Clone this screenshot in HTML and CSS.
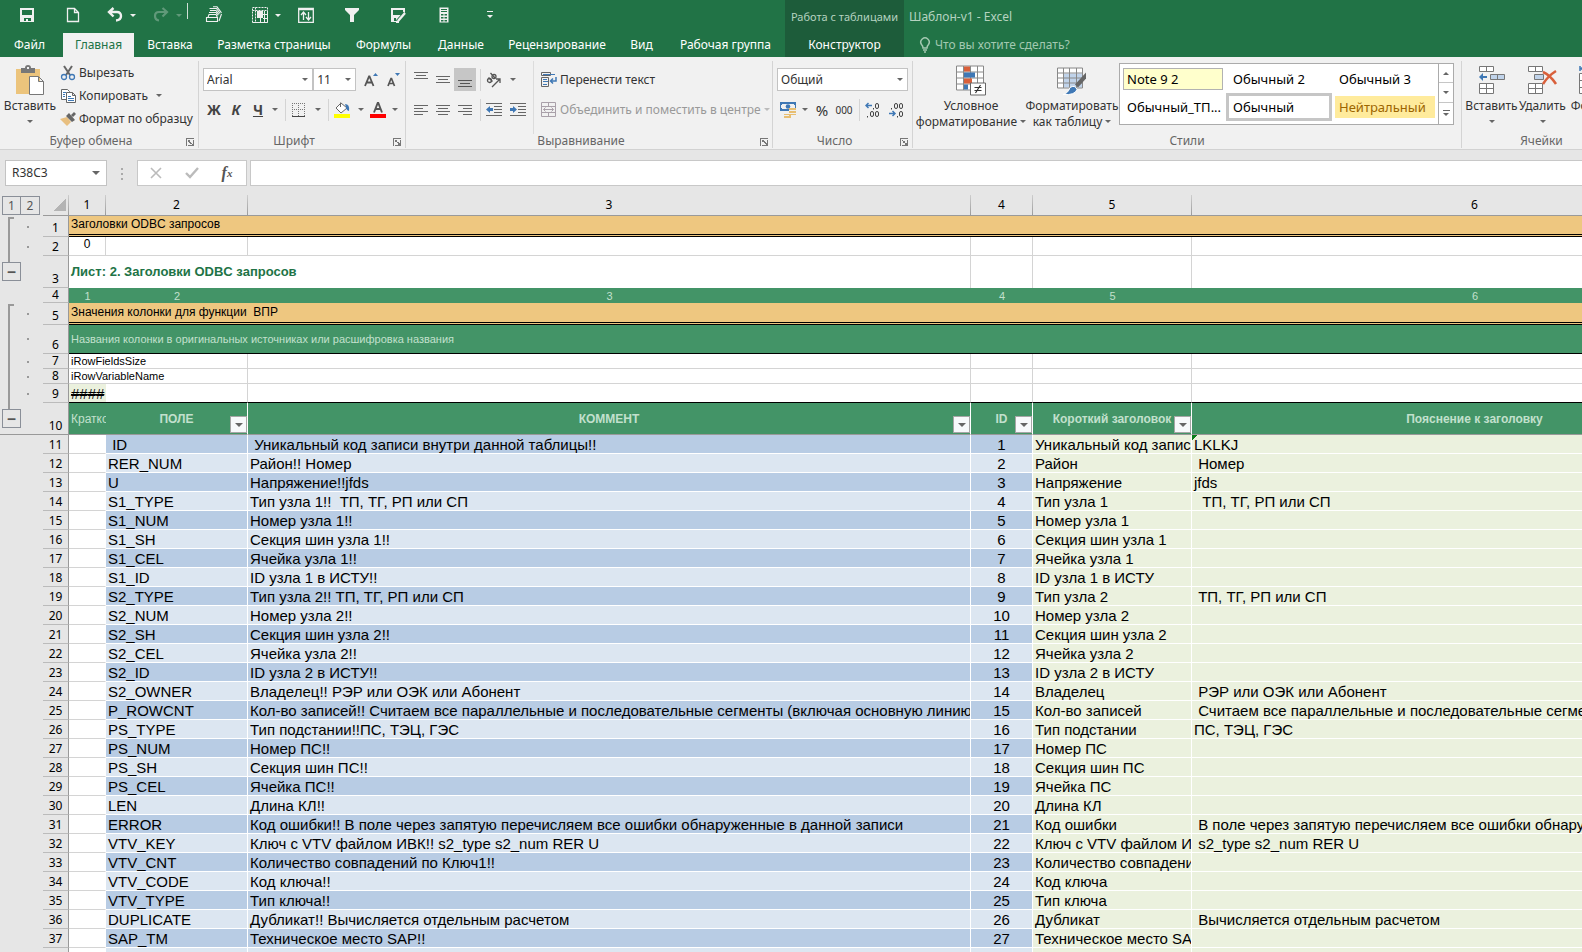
FILE: index.html
```html
<!DOCTYPE html>
<html lang="ru">
<head>
<meta charset="utf-8">
<title>Шаблон-v1 - Excel</title>
<link rel="stylesheet" href="styles.css">
</head>
<body>
<div class="app">
<header class="top">
  <div class="titlebar">
    <div class="qat">
      <button class="q" aria-label="Сохранить"><svg width="16" height="16" viewBox="0 0 16 16"><path fill="#f0f0f0" fill-rule="evenodd" d="M1 1h14v14H1zM3 3v5h10V3zM5 11v3h2v-2h2v2h3v-3z"/></svg></button>
      <button class="q" aria-label="Создать"><svg width="16" height="16" viewBox="0 0 16 16"><path fill="none" stroke="#f0f0f0" stroke-width="1.3" d="M2.5 1.5h7l4 4v9h-11zM9.500 1.500v4h4"/></svg></button>
      <span class="split shift"><button class="q" aria-label="Отменить"><svg width="16" height="16" viewBox="0 0 16 16"><path fill="none" stroke="#f0f0f0" stroke-width="2.400" d="M2 5h8q4 0 4 4t-5 4.500M6.500 1L2 5l4.500 4.500"/></svg></button><button class="qa" aria-label="Список отмены"><i class="dd"></i></button></span>
      <span class="split dim"><button class="q" aria-label="Повторить"><svg width="16" height="16" viewBox="0 0 16 16"><path fill="none" stroke="#f0f0f0" stroke-width="2.200" d="M14 5H6Q2 5 2 9t4 4.500M9.500 1L14 5l-4.500 4.500"/></svg></button><button class="qa" aria-label="Список повтора"><i class="dd"></i></button></span>
      <span class="qsep"></span>
      <button class="q" aria-label="Печать"><svg width="18" height="18" viewBox="0 0 18 18"><g fill="none" stroke="#f0f0f0" stroke-width="1.100"><path d="M1.500 11.500h11v4h-11zM3 11.500l1-3h7l1.500 3"/><path d="M4 6.500h7l2 3M5 4.500h6l3 4M4.500 2.500h7l3.500 5M8 .8h4l4.500 6M14 15l2.500-7"/></g></svg></button>
      <span class="split"><button class="q" aria-label="Таблица"><svg width="16" height="16" viewBox="0 0 16 16"><g fill="none" stroke="#f0f0f0"><path stroke-dasharray="2 1" d="M.5.5h15v15H.5zM.5 3.500h15M3.500.5v15"/><path d="M11 7.500h4.500M11 11.500h4.500M.5 15.500h15v-12M12.500 4v11M8.500 11v4"/></g><path fill="#f0f0f0" d="M5 4h6v7H5z"/></svg></button><button class="qa" aria-label="Варианты таблицы"><i class="dd"></i></button></span>
      <button class="q" aria-label="Сортировка"><svg width="16" height="16" viewBox="0 0 16 16"><path fill="none" stroke="#f0f0f0" stroke-width="1.300" d="M.7 1.500h14.600v13.800H.7zM.7 2.500h14.600M5.500 13V5.500M3 8l2.500-3L8 8M10.500 5v7.500M8 10l2.500 3L13 10"/></svg></button>
      <button class="q" aria-label="Фильтр"><svg width="16" height="16" viewBox="0 0 16 16"><path fill="#f0f0f0" d="M1 1h14v2l-5 5v7H6V8L1 3z"/></svg></button>
      <button class="q" aria-label="Сохранить как"><svg width="16" height="16" viewBox="0 0 16 16"><path fill="#f0f0f0" fill-rule="evenodd" d="M1 1h14v5l-8 9H1zM3 3v5h10V3zM4 11v3h2v-3z"/><path stroke="#217346" stroke-width="4" d="M7 15l8-9"/><path stroke="#f0f0f0" stroke-width="2.400" d="M8 14l7-8M6 15h3"/></svg></button>
      <button class="q" aria-label="Калькулятор"><svg width="16" height="16" viewBox="0 0 16 16"><path fill="#f0f0f0" fill-rule="evenodd" d="M3.500.5h9v15h-9zM5 2v1h6V2zM5 4v1h6V4zM5 7v1.500h2.500V7zM8.500 7v1.500H11V7zM5 10v1.500h2.500V10zM8.500 10v1.500H11V10zM5 13v1.500h2.500V13zM8.500 13v1.500H11V13z"/></svg></button>
      <button class="q" aria-label="Настройка панели"><svg width="8" height="8" viewBox="0 0 8 8"><path fill="#f0f0f0" d="M1 0h6v1H1zM1 4h6L4 7z"/></svg></button>
    </div>
    <div class="context-title">Работа с таблицами</div>
    <div class="doc-title">Шаблон-v1 - Excel</div>
  </div>
  <nav class="tabs">
    <button class="file">Файл</button><button class="active">Главная</button><button>Вставка</button><button>Разметка страницы</button><button>Формулы</button><button>Данные</button><button>Рецензирование</button><button>Вид</button><button>Рабочая группа</button><button class="context">Конструктор</button>
    <button class="tell"><svg width="12" height="16" viewBox="0 0 12 16"><path fill="none" stroke="#a3c9b1" stroke-width="1.500" d="M4 11Q4 9 2.500 7.500A4.200 4.200 0 1 1 9.500 7.500Q8 9 8 11zM4 13h4M5 15h2"/></svg>Что вы хотите сделать?</button>
  </nav>
</header>

<section class="ribbon">
  <div class="group g-clip">
    <div class="g-body">
      <button class="big paste"><svg width="30" height="32" viewBox="0 0 30 32"><path fill="#ecc47c" d="M1 4h24v25H1z"/><path fill="#777" d="M6 3h4q0-3 3-3t3 3h4v5H6z"/><path fill="#f0f0f0" d="M12 2h2v2h-2z"/><path fill="#fff" stroke="#777" d="M14.500 11.500h9l5 5v13h-14zM23.500 11.500v5h5"/></svg><span>Вставить</span><i class="dd"></i></button>
      <div class="stack">
        <button class="row"><svg width="16" height="16" viewBox="0 0 16 16"><path stroke="#666" stroke-width="2" d="M4 1l6 9M12 1L6 10"/><g fill="none" stroke="#3f78b5" stroke-width="1.300"><circle cx="4" cy="12" r="2.500"/><circle cx="12" cy="12" r="2.500"/></g></svg>Вырезать</button>
        <button class="row"><svg width="16" height="16" viewBox="0 0 16 16"><path fill="#fff" stroke="#666" d="M1.500 1.500h6l2 2v8h-8z"/><path fill="#fff" stroke="#666" d="M6.500 4.500h6l3 3v7h-9zM12.500 4.500v3h3"/><path stroke="#3f78b5" d="M3 4.500h3M3 6.500h2M3 8.500h2M8 8.500h3M8 10.500h6M8 12.500h6"/></svg>Копировать<i class="dd far"></i></button>
        <button class="row"><svg width="16" height="16" viewBox="0 0 16 16"><path fill="#e8bf80" d="M0 8l7-2 4 5-4 4z"/><path fill="#666" d="M6 5l3-3 6 7-3 2zM11 4l3-3 2 2-3 3z"/></svg>Формат по образцу</button>
      </div>
    </div>
    <div class="g-foot">Буфер обмена<button class="launch" aria-label="Параметры буфера"></button></div>
  </div>

  <div class="group g-font">
    <div class="g-rows">
      <div class="line">
        <select class="sel font" aria-label="Шрифт"><option>Arial</option></select><select class="sel size" aria-label="Размер"><option>11</option></select>
        <button class="ic grow" aria-label="Увеличить"><svg width="16" height="16" viewBox="0 0 16 16"><path fill="none" stroke="#555" stroke-width="1.800" d="M1 14L5 4.500h.5L9.500 14M2.500 10.500H8"/><path fill="#3f78b5" d="M9 4h5l-2.500-3z"/></svg></button>
        <button class="ic" aria-label="Уменьшить"><svg width="16" height="16" viewBox="0 0 16 16"><path fill="none" stroke="#555" stroke-width="1.700" d="M2 14l3-7.500h.5L8.500 14M3 11.500h4.500"/><path fill="#3f78b5" d="M9 1h5l-2.500 3z"/></svg></button>
      </div>
      <div class="line">
        <button class="ic b">Ж</button><button class="ic b it">К</button><button class="ic b un">Ч</button><button class="ar" aria-label="Подчеркивание"><i class="dd"></i></button><span class="vs"></span>
        <button class="ic wide" aria-label="Границы"><svg width="14" height="14" viewBox="0 0 14 14"><path fill="none" stroke="#777" stroke-dasharray="1 1" d="M.5 0v13M6.500 0v13M12.500 0v13M0 .5h13M0 6.500h13"/><path stroke="#444" d="M0 13.500h13"/></svg></button><button class="ar" aria-label="Виды границ"><i class="dd"></i></button><span class="vs"></span>
        <button class="ic wide" aria-label="Заливка"><svg width="16" height="17" viewBox="0 0 16 17"><path fill="#fff" stroke="#666" d="M2 7l5-5 6 5-6 5zM6.500 6V1.500"/><path fill="#3f78b5" d="M11 3q5 0 4 7-3-1-3-4z"/><path fill="#ff0" d="M0 13h16v4H0z"/></svg></button><button class="ar" aria-label="Цвет заливки"><i class="dd"></i></button>
        <button class="ic" aria-label="Цвет текста"><svg width="16" height="17" viewBox="0 0 16 17"><path fill="none" stroke="#555" stroke-width="1.900" d="M4 11.500L7.700 2h.6L12 11.500M5.500 8h5"/><path fill="red" d="M0 13h16v4H0z"/></svg></button><button class="ar" aria-label="Палитра"><i class="dd"></i></button>
      </div>
    </div>
    <div class="g-foot">Шрифт<button class="launch" aria-label="Параметры шрифта"></button></div>
  </div>

  <div class="group g-align">
    <div class="g-cols">
      <div class="g-rows">
        <div class="line">
          <button class="ic" aria-label="По верхнему краю"><svg width="14" height="16" viewBox="0 0 14 16"><path stroke="#666" d="M0 .5h14M2 3.500h10M0 6.500h14"/></svg></button><button class="ic" aria-label="По середине"><svg width="14" height="16" viewBox="0 0 14 16"><path stroke="#666" d="M0 4.500h14M2 7.500h10M0 10.500h14"/></svg></button><button class="ic on" aria-label="По нижнему краю"><svg width="14" height="16" viewBox="0 0 14 16"><path stroke="#555" d="M0 8.500h14M2 11.500h10M0 14.500h14"/></svg></button><span class="vs"></span>
          <button class="ic wide" aria-label="Ориентация"><svg width="18" height="16" viewBox="0 0 18 16"><g fill="none" stroke="#555" stroke-width="1.300"><circle cx="4.500" cy="8.500" r="2"/><path d="M3.500 5.500l4 4"/><circle cx="9" cy="4.500" r="2"/><path d="M5.500 1l4.500 5M7 15l8-8M11 7h4v4"/></g></svg></button><button class="ar" aria-label="Варианты ориентации"><i class="dd"></i></button>
        </div>
        <div class="line">
          <button class="ic" aria-label="По левому краю"><svg width="14" height="14" viewBox="0 0 14 14"><path stroke="#666" d="M0 2.500h14M0 5.500h9M0 8.500h14M0 11.500h9"/></svg></button><button class="ic" aria-label="По центру"><svg width="14" height="14" viewBox="0 0 14 14"><path stroke="#666" d="M0 2.500h14M2 5.500h10M0 8.500h14M2 11.500h10"/></svg></button><button class="ic" aria-label="По правому краю"><svg width="14" height="14" viewBox="0 0 14 14"><path stroke="#666" d="M0 2.500h14M5 5.500h9M0 8.500h14M5 11.500h9"/></svg></button><span class="vs"></span>
          <button class="ic wide" aria-label="Уменьшить отступ"><svg width="16" height="14" viewBox="0 0 16 14"><path stroke="#666" d="M0 .5h16M8 3.500h8M8 6.500h8M8 9.500h8M0 12.500h16"/><path fill="#3f78b5" d="M0 6.500L4 3v2h3v3H4v2z"/></svg></button><button class="ic" aria-label="Увеличить отступ"><svg width="16" height="14" viewBox="0 0 16 14"><path stroke="#666" d="M0 .5h16M8 3.500h8M8 6.500h8M8 9.500h8M0 12.500h16"/><path fill="#3f78b5" d="M7 6.500L3 3v2H0v3h3v2z"/></svg></button>
        </div>
      </div>
      <div class="g-rows wrap">
        <div class="line"><button class="row"><svg width="16" height="16" viewBox="0 0 16 16"><path fill="none" stroke="#666" d="M.5.500h9v3h-9zM.5 5.500h7v9h-7zM9 2.500h5"/><path stroke="#3f78b5" d="M2 2.500h12M2 7.500h4M2 9.500h5M2 12.500h4"/><path fill="none" stroke="#3f78b5" stroke-width="1.500" d="M15 5v4h-5M12 6.500L9.500 9l2.500 2.500"/></svg>Перенести текст</button></div>
        <div class="line"><button class="row off"><svg width="16" height="16" viewBox="0 0 16 16"><path fill="none" stroke="#a9a0a9" d="M.5.500h14v14H.5zM.5 4.500h14M.5 10.500h14M7.500.500v4M7.500 10.500v4M2.500 7.500h10M4.500 5.500l-2 2 2 2M10.500 5.500l2 2-2 2"/></svg>Объединить и поместить в центре<i class="dd"></i></button></div>
      </div>
    </div>
    <div class="g-foot">Выравнивание<button class="launch" aria-label="Параметры выравнивания"></button></div>
  </div>

  <div class="group g-num">
    <div class="g-rows">
      <div class="line"><select class="sel num" aria-label="Формат числа"><option>Общий</option></select></div>
      <div class="line">
        <button class="ic" aria-label="Денежный"><svg width="17" height="16" viewBox="0 0 17 16"><path fill="#3f78b5" fill-rule="evenodd" d="M0 0h16v9H0zM2 2v1H1v3h1v1h12V6h1V3h-1V2z"/><circle cx="8" cy="4.500" r="2.300" fill="#3f78b5"/><path fill="#e8bf72" d="M9 6h7v7H9zM4 12h7v4H4z"/><path stroke="#f0f0f0" d="M9 8.500h7M9 11.500h7M4 13.500h5"/></svg></button><button class="ar" aria-label="Валюты"><i class="dd"></i></button><button class="ic pc">%</button><button class="ic k">000</button><span class="vs"></span>
        <button class="ic wide" aria-label="Увеличить разрядность"><svg width="16" height="16" viewBox="0 0 16 16"><path fill="none" stroke="#3f78b5" stroke-width="1.500" d="M7 3.500H1M3.500 1L1 3.500 3.500 6"/><g fill="none" stroke="#444"><rect x="10.500" y="1.500" width="3" height="5" rx="1.500"/><rect x="5.500" y="9.500" width="3" height="5" rx="1.500"/><rect x="10.500" y="9.500" width="3" height="5" rx="1.500"/><path d="M8.500 6v1.500M2.500 14v1.500"/></g></svg></button><button class="ic" aria-label="Уменьшить разрядность"><svg width="16" height="16" viewBox="0 0 16 16"><path fill="none" stroke="#3f78b5" stroke-width="1.500" d="M0 11.500h6M3.500 9L6 11.500 3.500 14"/><g fill="none" stroke="#444"><rect x="5.500" y="1.500" width="3" height="5" rx="1.500"/><rect x="10.500" y="1.500" width="3" height="5" rx="1.500"/><rect x="10.500" y="9.500" width="3" height="5" rx="1.500"/><path d="M2.500 6v1.500M8.500 14v1.500"/></g></svg></button>
      </div>
    </div>
    <div class="g-foot">Число<button class="launch" aria-label="Параметры числа"></button></div>
  </div>

  <div class="group g-styles">
    <div class="g-body">
      <button class="big cf"><svg width="30" height="31" viewBox="0 0 30 31"><path fill="#fff" stroke="#888" d="M.5.500h27v24H.5zM.5 6.500h27M.5 12.500h27M.5 18.500h27M7.500.500v24M14.500.500v24M21.500.500v24"/><path fill="#d9603b" d="M8 1h6v5H8zM8 13h8v5H8z"/><path fill="#3f78b5" d="M8 7h11v5H8zM8 19h4v5H8z"/><path fill="#fff" stroke="#666" d="M14.500 17.500h15v12h-15z"/><path stroke="#333" stroke-width="1.200" d="M18.500 22h7M18.500 25h7M24.500 19.500l-5 8"/></svg><span>Условное</span><span>форматирование<i class="dd"></i></span></button>
      <button class="big ft"><svg width="30" height="31" viewBox="0 0 30 31"><path fill="#fff" d="M1 3h25v19H1z"/><path fill="#c0d3ea" d="M7 8h18v14H7z"/><path fill="none" stroke="#888" d="M.5 2.500h25v20H.5zM.5 7.500h25M.5 12.500h25M.5 17.500h25M6.500 2.500v20M12.500 2.500v20M19.500 2.500v20"/><path fill="#666" d="M18 19L29 7v6l-8 9z"/><path fill="#3f78b5" stroke="#fff" d="M6 29q5-1 7-7 5-3 7 2-2 6-14 5z"/></svg><span>Форматировать</span><span>как таблицу<i class="dd"></i></span></button>
      <div class="gallery">
        <div class="styles-grid">
          <button class="note">Note 9 2</button><button>Обычный 2</button><button>Обычный 3</button>
          <button>Обычный_ТП...</button><button class="cur">Обычный</button><button class="neutral">Нейтральный</button>
        </div>
        <div class="scroller"><button aria-label="Вверх"><i class="dd up"></i></button><button aria-label="Вниз"><i class="dd"></i></button><button class="more" aria-label="Еще"><i class="dd"></i></button></div>
      </div>
    </div>
    <div class="g-foot">Стили</div>
  </div>

  <div class="group g-cells">
    <div class="g-body">
      <button class="big"><svg width="28" height="30" viewBox="0 0 28 30"><path fill="#fff" stroke="#777" d="M1.500.500h14v5h-14zM8.500.500v5M1.500 17.500h14v10h-14zM1.500 22.500h14M8.500 17.500v10"/><path fill="#c0d3ea" stroke="#777" d="M12.500 8.500h14v5h-14zM19.500 8.500v5"/><path fill="#3f78b5" d="M1 11l4-4v3h4v2H5v3z"/></svg><span>Вставить</span><i class="dd"></i></button>
      <button class="big"><svg width="30" height="30" viewBox="0 0 30 30"><path fill="#fff" stroke="#777" d="M.5.500h14v5H.5zM7.500.500v5M.5 17.500h14v10H.5zM.5 22.500h14M7.500 17.500v10"/><path fill="#c0d3ea" stroke="#777" d="M6.500 8.500h9v5h-9z"/><path fill="none" stroke="#d9603b" stroke-width="2.500" d="M15 6q7 3 13 12M28 5q-8 5-13 13"/></svg><span>Удалить</span><i class="dd"></i></button>
      <button class="big"><svg width="30" height="30" viewBox="0 0 30 30"><path fill="#fff" stroke="#777" d="M.5 7.500h28v20H.5zM.5 14.500h28M.5 21.500h28M9.500 7.500v20"/><path fill="none" stroke="#3f78b5" stroke-width="1.500" d="M1 0v5M1 2.500h27M28 0v5M5 .5L2 2.500 5 5"/></svg><span>Формат</span><i class="dd"></i></button>
    </div>
    <div class="g-foot">Ячейки</div>
  </div>
</section>

<section class="formula">
  <select class="namebox" aria-label="Имя"><option>R38C3</option></select>
  <span class="grip"></span>
  <div class="fbtns">
    <button aria-label="Отмена"><svg width="12" height="12" viewBox="0 0 12 12"><path stroke="#bbb" stroke-width="1.600" d="M1 1l10 10M11 1L1 11"/></svg></button>
    <button aria-label="Ввод"><svg width="14" height="12" viewBox="0 0 14 12"><path fill="none" stroke="#bbb" stroke-width="2.400" d="M1 6l4 4 8-9"/></svg></button>
    <button class="fx">f<sub>x</sub></button>
  </div>
  <input class="fx-input" type="text" aria-label="Строка формул">
</section>

<main class="sheet">
  <aside class="outline">
    <div class="levels"><button>1</button><button>2</button></div>
    <div class="og first"><div class="br"><span></span><button aria-label="Свернуть">−</button></div><div class="dots"><i></i><i></i></div></div>
    <div class="og second"><div class="br"><span></span><button aria-label="Свернуть">−</button></div><div class="dots"><i></i><i class="tall"></i><i class="sm"></i><i class="sm"></i><i></i></div></div>
  </aside>
  <table class="grid">
    <colgroup><col class="c0"><col class="c1"><col class="c2"><col class="c3"><col class="c4"><col class="c5"><col class="c6"></colgroup>
    <thead><tr><th class="corner"></th><th>1</th><th>2</th><th>3</th><th>4</th><th>5</th><th>6</th></tr></thead>
    <tbody class="head">
      <tr class="r1 band"><th>1</th><td colspan="6">Заголовки ODBC запросов</td></tr>
      <tr class="r2"><th>2</th><td class="mid">0</td><td></td><td></td><td></td><td></td><td></td></tr>
      <tr class="r3"><th>3</th><td colspan="3" class="sheet-title">Лист: 2. Заголовки ODBC запросов</td><td></td><td></td><td></td></tr>
      <tr class="r4"><th>4</th><td>1</td><td>2</td><td>3</td><td>4</td><td>5</td><td>6</td></tr>
      <tr class="r5 band"><th>5</th><td colspan="6">Значения колонки для функции  ВПР</td></tr>
      <tr class="r6"><th>6</th><td colspan="6">Названия колонки в оригинальных источниках или расшифровка названия</td></tr>
      <tr class="r7"><th>7</th><td colspan="2">iRowFieldsSize</td><td></td><td></td><td></td><td></td></tr>
      <tr class="r7"><th>8</th><td colspan="2">iRowVariableName</td><td></td><td></td><td></td><td></td></tr>
      <tr class="r9"><th>9</th><td class="hash">####</td><td></td><td></td><td></td><td></td><td></td></tr>
      <tr class="r10"><th>10</th><td class="short">Кратко</td><td>ПОЛЕ<button class="flt" aria-label="Фильтр"></button></td><td>КОММЕНТ<button class="flt" aria-label="Фильтр"></button></td><td>ID<button class="flt" aria-label="Фильтр"></button></td><td>Короткий заголовок<button class="flt" aria-label="Фильтр"></button></td><td>Пояснение к заголовку</td></tr>
    </tbody>
    <tbody class="data">
      <tr><th>11</th><td></td><td> ID</td><td> Уникальный код записи внутри данной таблицы!!</td><td>1</td><td>Уникальный код записи</td><td class="flag">LKLKJ</td></tr>
      <tr><th>12</th><td></td><td>RER_NUM</td><td>Район!! Номер</td><td>2</td><td>Район</td><td> Номер</td></tr>
      <tr><th>13</th><td></td><td>U</td><td>Напряжение!!jfds</td><td>3</td><td>Напряжение</td><td>jfds</td></tr>
      <tr><th>14</th><td></td><td>S1_TYPE</td><td>Тип узла 1!!  ТП, ТГ, РП или СП</td><td>4</td><td>Тип узла 1</td><td>  ТП, ТГ, РП или СП</td></tr>
      <tr><th>15</th><td></td><td>S1_NUM</td><td>Номер узла 1!!</td><td>5</td><td>Номер узла 1</td><td></td></tr>
      <tr><th>16</th><td></td><td>S1_SH</td><td>Секция шин узла 1!!</td><td>6</td><td>Секция шин узла 1</td><td></td></tr>
      <tr><th>17</th><td></td><td>S1_CEL</td><td>Ячейка узла 1!!</td><td>7</td><td>Ячейка узла 1</td><td></td></tr>
      <tr><th>18</th><td></td><td>S1_ID</td><td>ID узла 1 в ИСТУ!!</td><td>8</td><td>ID узла 1 в ИСТУ</td><td></td></tr>
      <tr><th>19</th><td></td><td>S2_TYPE</td><td>Тип узла 2!! ТП, ТГ, РП или СП</td><td>9</td><td>Тип узла 2</td><td> ТП, ТГ, РП или СП</td></tr>
      <tr><th>20</th><td></td><td>S2_NUM</td><td>Номер узла 2!!</td><td>10</td><td>Номер узла 2</td><td></td></tr>
      <tr><th>21</th><td></td><td>S2_SH</td><td>Секция шин узла 2!!</td><td>11</td><td>Секция шин узла 2</td><td></td></tr>
      <tr><th>22</th><td></td><td>S2_CEL</td><td>Ячейка узла 2!!</td><td>12</td><td>Ячейка узла 2</td><td></td></tr>
      <tr><th>23</th><td></td><td>S2_ID</td><td>ID узла 2 в ИСТУ!!</td><td>13</td><td>ID узла 2 в ИСТУ</td><td></td></tr>
      <tr><th>24</th><td></td><td>S2_OWNER</td><td>Владелец!! РЭР или ОЭК или Абонент</td><td>14</td><td>Владелец</td><td> РЭР или ОЭК или Абонент</td></tr>
      <tr><th>25</th><td></td><td>P_ROWCNT</td><td>Кол-во записей!! Считаем все параллельные и последовательные сегменты (включая основную линию)</td><td>15</td><td>Кол-во записей</td><td> Считаем все параллельные и последовательные сегменты (включая основную линию)</td></tr>
      <tr><th>26</th><td></td><td>PS_TYPE</td><td>Тип подстании!!ПС, ТЭЦ, ГЭС</td><td>16</td><td>Тип подстании</td><td>ПС, ТЭЦ, ГЭС</td></tr>
      <tr><th>27</th><td></td><td>PS_NUM</td><td>Номер ПС!!</td><td>17</td><td>Номер ПС</td><td></td></tr>
      <tr><th>28</th><td></td><td>PS_SH</td><td>Секция шин ПС!!</td><td>18</td><td>Секция шин ПС</td><td></td></tr>
      <tr><th>29</th><td></td><td>PS_CEL</td><td>Ячейка ПС!!</td><td>19</td><td>Ячейка ПС</td><td></td></tr>
      <tr><th>30</th><td></td><td>LEN</td><td>Длина КЛ!!</td><td>20</td><td>Длина КЛ</td><td></td></tr>
      <tr><th>31</th><td></td><td>ERROR</td><td>Код ошибки!! В поле через запятую перечисляем все ошибки обнаруженные в данной записи</td><td>21</td><td>Код ошибки</td><td> В поле через запятую перечисляем все ошибки обнаруженные в данной записи</td></tr>
      <tr><th>32</th><td></td><td>VTV_KEY</td><td>Ключ с VTV файлом ИВК!! s2_type s2_num RER U</td><td>22</td><td>Ключ с VTV файлом ИВК</td><td> s2_type s2_num RER U</td></tr>
      <tr><th>33</th><td></td><td>VTV_CNT</td><td>Количество совпадений по Ключ1!!</td><td>23</td><td>Количество совпадений</td><td></td></tr>
      <tr><th>34</th><td></td><td>VTV_CODE</td><td>Код ключа!!</td><td>24</td><td>Код ключа</td><td></td></tr>
      <tr><th>35</th><td></td><td>VTV_TYPE</td><td>Тип ключа!!</td><td>25</td><td>Тип ключа</td><td></td></tr>
      <tr><th>36</th><td></td><td>DUPLICATE</td><td>Дубликат!! Вычисляется отдельным расчетом</td><td>26</td><td>Дубликат</td><td> Вычисляется отдельным расчетом</td></tr>
      <tr><th>37</th><td></td><td>SAP_TM</td><td>Техническое место SAP!!</td><td>27</td><td>Техническое место SAP</td><td></td></tr>
      <tr><th></th><td></td><td></td><td></td><td></td><td></td><td></td></tr>
    </tbody>
  </table>
</main>
</div>
</body>
</html>
```

FILE: styles.css
```css
* { box-sizing: border-box; }
body { margin: 0; overflow: hidden; background: #e6e6e6; color: #333; font: 12px/16px "Noto Sans", sans-serif; }
button { margin: 0; padding: 0; border: 0; background: none; color: inherit; font: inherit; white-space: nowrap; }
svg { display: block; flex: none; }
.app { display: flex; flex-direction: column; height: 100vh; overflow: hidden; }
.dd { display: inline-block; flex: none; width: 0; height: 0; border: 3px solid transparent; border-top-color: #666; border-bottom: 0; }
.dd.up { border-top: 0; border-bottom: 3px solid #666; }

/* Title bar and tabs */
.top { flex: none; background: #217346; color: #fff; }
.titlebar { display: grid; grid-template-columns: 785px 119px 1fr; height: 33px; }
.qat { display: flex; align-items: center; gap: 24px; padding: 0 0 4px 16px; }
.q { display: flex; align-items: center; justify-content: center; flex: none; width: 22px; height: 22px; }
.qa { display: flex; align-items: center; justify-content: center; flex: none; width: 14px; height: 22px; }
.split { display: flex; flex: none; width: 22px; }
.split.shift { margin-left: -4px; }
.split.dim { opacity: .3; }
.top .dd { border-top-color: #f0f0f0; }
.qsep { align-self: flex-start; flex: none; width: 1px; height: 16px; margin: 3px -9px 0; background: #d0e0d6; }
.context-title, .doc-title { line-height: 34px; white-space: nowrap; color: #b5d3c0; }
.context-title { background: #1d5c3a; font-size: 11px; text-align: center; }
.doc-title { padding-left: 5px; }
.tabs { display: grid; grid-template-columns: 63px 71px 72px 136px 83px 72px 120px 49px 119px 119px 1fr; height: 24px; }
.tabs .file { padding-right: 4px; }
.tabs .active { background: #f1f1f1; color: #217346; }
.tabs .context { background: #1d5c3a; }
.tabs .tell { display: flex; align-items: center; gap: 4px; padding-left: 15px; color: #a3c9b1; }

/* Ribbon */
.ribbon { display: flex; flex: none; height: 93px; overflow: hidden; background: #f1f1f1; border-bottom: 1px solid #d2d2d2; }
.group { display: flex; flex-direction: column; flex: none; margin: 4px 0 1px; border-right: 1px solid #d4d4d4; }
.g-clip { width: 199px; }
.g-font { width: 207px; }
.g-align { width: 367px; }
.g-num { width: 140px; }
.g-styles { width: 549px; }
.g-cells { width: 160px; }
.g-body, .g-cols { display: flex; flex: 1; min-height: 0; }
.g-foot { display: flex; justify-content: center; position: relative; height: 14px; padding-right: 16px; line-height: 14px; color: #666; }
.g-styles .g-foot, .g-cells .g-foot { padding-right: 0; }
.launch { position: absolute; right: 4px; bottom: 2px; width: 8px; height: 8px; border: solid #777; border-width: 1px 0 0 1px; }
.launch::after { content: ""; position: absolute; right: 0; bottom: 0; width: 5px; height: 5px; border: solid #777; border-width: 0 1px 1px 0; background: linear-gradient(45deg, transparent 40%, #777 40% 60%, transparent 60%); }
.big { display: flex; flex-direction: column; align-items: center; flex: none; padding-top: 4px; }
.big svg { height: 32px; margin-bottom: 1px; }
.big > .dd { margin-top: 6px; }
.big span .dd { margin: 0 0 3px 3px; }
.big span { line-height: 16px; }
.paste { width: 60px; }
.stack { display: grid; grid-template-rows: repeat(3, 23px); align-content: start; }
.row { display: flex; align-items: center; gap: 3px; }
.far { margin-left: 5px; }
.off { color: #999; }
.off .dd { border-top-color: #bbb; }
.g-rows { display: flex; flex-direction: column; flex: 1; gap: 7px; padding: 7px 0 0 4px; }
.line { display: flex; align-items: center; flex: none; height: 23px; }
.sel, .namebox { appearance: none; margin: 0; border: 1px solid #c3c3c3; border-radius: 0; color: #333; font: inherit; background: #fff url("data:image/svg+xml,%3Csvg xmlns='http://www.w3.org/2000/svg' width='6' height='3'%3E%3Cpath fill='%23666' d='M0 0h6L3 3z'/%3E%3C/svg%3E") no-repeat right 4px center; }
.sel { height: 23px; padding: 0 3px; }
.font { width: 111px; }
.size { width: 43px; }
.num { width: 131px; }
.ic { display: flex; align-items: center; justify-content: center; flex: none; width: 22px; height: 23px; }
.ic.wide { width: 26px; }
.ic.on { background: #c6c6c6; }
.grow { margin-left: 5px; }
.b { font-size: 14px; font-weight: 700; color: #444; }
.it { font-style: italic; }
.un { text-decoration: underline; }
.pc { font-size: 15px; }
.k { font-size: 10px; }
.ar { display: flex; align-items: center; justify-content: center; flex: none; width: 12px; height: 23px; }
.vs { flex: none; width: 1px; height: 22px; margin-left: 4px; background: #d4d4d4; }
.g-align .g-rows { flex: none; width: 127px; }
.g-align .g-rows.wrap { flex: 1; padding-left: 7px; border-left: 1px solid #dcdcdc; }
.cf { width: 116px; }
.ft { width: 86px; }
.gallery { display: flex; flex: none; width: 335px; height: 62px; margin: 2px 0 0 4px; border: 1px solid #ababab; background: #fff; }
.styles-grid { display: grid; grid-template-columns: 100px 106px 100px; grid-template-rows: 22px 28px; align-items: center; gap: 3px; padding: 4px 3px; font-size: 13px; color: #000; }
.styles-grid button { height: 22px; padding: 0 4px; text-align: left; overflow: hidden; }
.styles-grid button:nth-child(3n+2) { padding-left: 7px; }
.styles-grid .note { background: #ffffcc; border: 1px solid #b2b2b2; padding: 0 3px; }
.styles-grid .cur { height: 28px; border: 3px solid #c6c6c6; }
.styles-grid .cur:nth-child(3n+2) { padding-left: 4px; }
.styles-grid .neutral { background: #ffeb9c; color: #9c6500; }
.scroller { display: grid; flex: 1; border-left: 1px solid #ababab; }
.scroller button { display: flex; flex-direction: column; align-items: center; justify-content: center; gap: 2px; }
.scroller button + button { border-top: 1px solid #c6c6c6; }
.more::before { content: ""; width: 7px; height: 1px; background: #666; }
.g-cells .g-body { padding-left: 4px; }
.g-cells .big { width: 51px; }

/* Formula bar */
.formula { display: flex; flex: none; height: 45px; padding: 10px 0 9px 5px; }
.namebox { width: 102px; padding: 0 6px; background-position: right 6px center; background-size: 8px 4px; }
.grip { width: 30px; padding: 6px 0 5px; background: linear-gradient(#aaa 2px, transparent 2px) center 7px / 2px 5px repeat-y content-box; }
.fbtns { display: flex; align-items: center; justify-content: space-around; width: 110px; padding: 0 2px 0 0; border: 1px solid #c8c8c8; background: #fff; }
.fbtns button { display: flex; }
.fbtns .fx { font: italic 700 16px/18px "Liberation Serif", serif; color: #555; }
.fx sub { font-size: 11px; }
.fx-input { flex: 1; min-width: 0; margin-left: 3px; border: 1px solid #c8c8c8; border-right: 0; border-radius: 0; background: #fff; }

/* Outline gutter */
.sheet { display: flex; flex: 1; min-height: 0; }
.outline { flex: none; width: 43px; height: 240px; border-bottom: 1px solid #999; }
.levels { display: flex; height: 21px; padding: 1px 0 0 2px; }
.levels button { width: 19px; height: 19px; border: 1px solid #8a8f98; color: #555; }
.levels button + button { border-left: 0; }
.og { display: grid; grid-template-columns: 21px 1fr; }
.first { height: 88px; padding-top: 1px; }
.br { display: flex; flex-direction: column; padding-left: 2px; }
.br span { flex: 1; width: 6px; margin-left: 6px; border: solid #999; border-width: 2px 0 0 2px; }
.br button { flex: none; width: 19px; height: 19px; border: 1px solid #8a8f98; font: 700 16px/16px "Noto Sans", sans-serif; color: #555; }
.first .br { height: 64px; }
.second .br { height: 124px; }
.dots i { display: block; height: 20px; background: linear-gradient(#999, #999) 6px center / 2px 2px no-repeat; }
.dots .tall { height: 30px; }
.dots .sm { height: 15px; }

/* Grid */
.grid { flex: none; align-self: flex-start; width: 1715px; table-layout: fixed; border-collapse: separate; border-spacing: 0; font: 15px/17px "Liberation Sans", Arial, sans-serif; color: #000; }
.c0 { width: 26px; } .c1 { width: 37px; } .c2 { width: 142px; } .c3 { width: 723px; } .c4 { width: 62px; } .c5 { width: 159px; } .c6 { width: 566px; }
.grid th, .grid td { padding: 0 2px; overflow: hidden; white-space: pre; vertical-align: bottom; text-align: left; }
.grid th { padding: 0; font: 12px/16px "Noto Sans", sans-serif; text-align: center; background: #e6e6e6; }
.grid thead th { height: 21px; vertical-align: middle; border: solid; border-width: 0 1px 1px 0; border-image: linear-gradient(#d0d0d0, #999) 1; }
.grid thead .corner { background: linear-gradient(135deg, #e6e6e6 50%, #b4b4b4 50%) 11px 4px / 12px 12px no-repeat #e6e6e6; }
.grid tbody th { line-height: 17px; border-right: 1px solid #999; border-bottom: 1px solid #bbb; }
.grid tbody td { background: #fff; border-right: 1px solid #d4d4d4; border-bottom: 1px solid #d4d4d4; }
.head { font-size: 12px; line-height: 14px; }
.grid .band td { padding-top: 1px; vertical-align: top; background: #eec780; border-bottom: 3px double #000; }
.r1 { height: 21px; } .r2 { height: 19px; } .r3 { height: 32px; } .r4 { height: 15px; } .r5 { height: 22px; } .r6 { height: 29px; } .r7 { height: 15px; } .r9 { height: 19px; } .r10 { height: 32px; }
.head .r5 td { padding-top: 2px; }
.head .r2 td { vertical-align: top; text-align: center; }
.head .r3 td { border-bottom: 0; }
.head .sheet-title { vertical-align: middle; font-size: 13px; line-height: 16px; font-weight: 700; color: #217346; }
.head .r4 td { background: #439467; border: 0; text-align: center; font-size: 11px; line-height: 14px; color: #c2e0cd; }
.head .r6 td { background: #439467; border-bottom-color: #000; vertical-align: middle; font-size: 11px; color: #c2e0cd; }
.head .r7 td { font-size: 11px; line-height: 13px; }
.head .r4 th, .head .r7 th { line-height: 14px; }
.head .r9 td { border-bottom-color: #000; }
.head .r9 .hash { padding-right: 0; background: #ebf1de; border-right: 0; font-size: 15px; line-height: 16px; text-decoration: line-through; }
.head .r10 td { position: relative; background: #439467; border-right-color: #fff; border-bottom-color: #999; vertical-align: middle; text-align: center; font-weight: 700; color: #c2e0cd; }
.head .r10 .short { border-right: 0; text-align: left; font-weight: 400; padding-right: 0; }
.head .r10 th { border-bottom-color: #999; }
.flt { position: absolute; right: 0; bottom: 1px; width: 17px; height: 17px; border: 1px solid #a6a6a6; background: #f7f9fb; }
.flt::after { content: ""; position: absolute; left: 4px; top: 6px; border: 4px solid transparent; border-top-color: #666; border-bottom: 0; }
.data tr { height: 19px; }
.grid .data td { border-color: #fff; background: #dce6f1; }
.grid .data tr:nth-child(odd) td { background: #b8cce4; }
.grid .data td:nth-child(2) { background: #fff; border-bottom-color: #d4d4d4; }
.grid .data tr:nth-child(odd) td:nth-child(2) { background: #fff; }
.grid .data td:nth-child(5) { text-align: center; }
.grid .data td:nth-child(n+6), .grid .data tr:nth-child(odd) td:nth-child(n+6) { background: #ebf1de; }
.grid .data tr:nth-child(odd) td.flag:nth-child(n+6) { background: linear-gradient(135deg, #0a7d1a 4px, transparent 4px), #ebf1de; }
```
